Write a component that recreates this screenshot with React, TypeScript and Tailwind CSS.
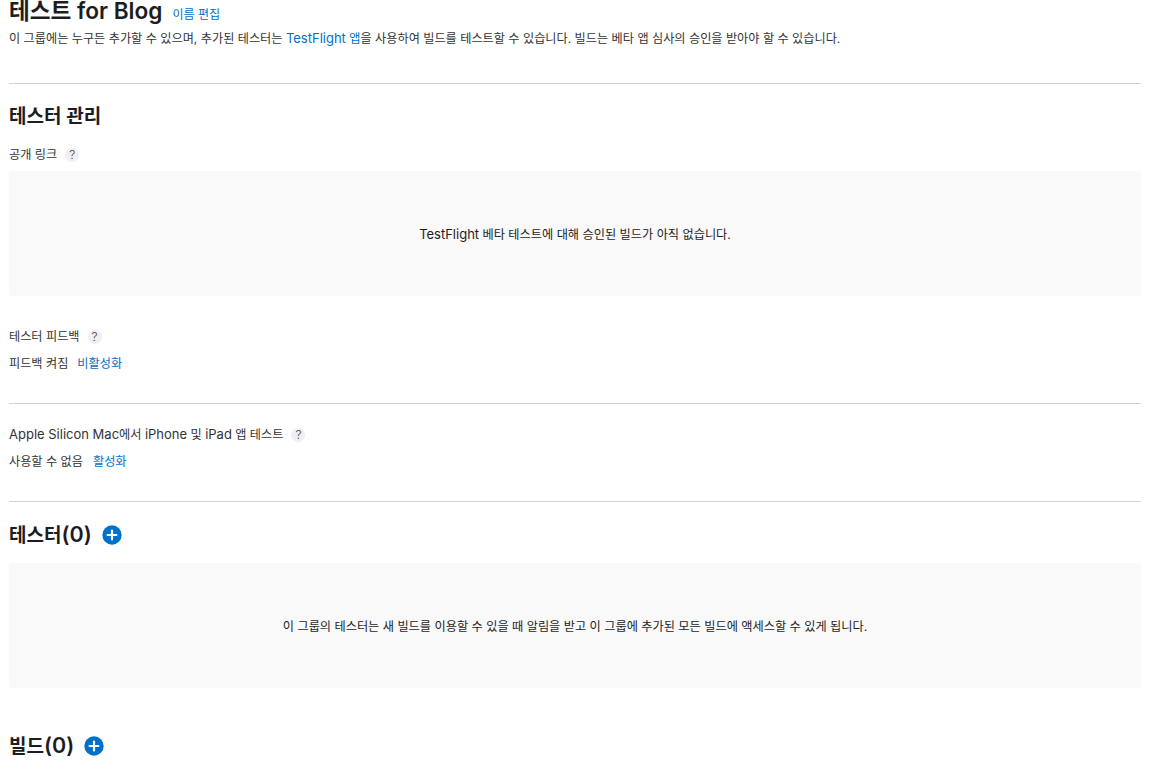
const FONT = "font-['Inter','Noto_Sans_CJK_KR',sans-serif]";

function Help() {
  return (
    <span className="ml-[8px] flex h-[14px] w-[14px] items-center justify-center rounded-full bg-[#f0f0f0] text-[12px] leading-none font-light text-[#444]">?</span>
  );
}

function Plus() {
  return (
    <svg width="20" height="20" viewBox="0 0 20 20" className="ml-[10px]">
      <circle cx="10" cy="10" r="9.7" fill="#0070c9" />
      <path d="M10 5.6v8.8M5.6 10h8.8" stroke="#fff" strokeWidth="2.2" strokeLinecap="round" />
    </svg>
  );
}

function Link({ children }: { children: React.ReactNode }) {
  return <span className="text-[#0070c9]">{children}</span>;
}

function L({ children }: { children: React.ReactNode }) {
  return <span className="text-[13px]">{children}</span>;
}

function Empty({ children }: { children: React.ReactNode }) {
  return (
    <div className="flex h-[125px] items-center justify-center rounded-[3px] bg-[#f9f9f9] pt-[2px] text-[12.2px] text-[#1d1d1f]">
      <span>{children}</span>
    </div>
  );
}

export default function App() {
  return (
    <div className={`${FONT} h-[766px] w-[1150px] overflow-hidden bg-white px-[9px] text-[12.17px] text-[#333]`}>
      <div className="flex h-[22px] items-center">
        <span className="text-[22.6px] leading-[22px] font-semibold text-[#1d1d1f]">테스트 for Blog</span>
        <span className="ml-[10px] mt-[7px] text-[12px]"><Link>이름 편집</Link></span>
      </div>
      <div className="mt-[6px] h-[20px] leading-[20px]">
        이 그룹에는 누구든 추가할 수 있으며, 추가된 테스터는 <Link><L>TestFlight</L> 앱</Link>을 사용하여 빌드를 테스트할 수 있습니다. 빌드는 베타 앱 심사의 승인을 받아야 할 수 있습니다.
      </div>
      <div className="mt-[35px] h-px bg-[#d2d2d2]" />
      <h2 className="mt-[19px] h-[28px] text-[19px] leading-[28px] font-semibold text-[#1d1d1f]">테스터 관리</h2>
      <div className="mt-[16px] flex h-[16px] items-center">공개 링크<Help /></div>
      <div className="mt-[8px]"><Empty><L>TestFlight</L> 베타 테스트에 대해 승인된 빌드가 아직 없습니다.</Empty></div>
      <div className="mt-[33px] flex h-[16px] items-center">테스터 피드백<Help /></div>
      <div className="mt-[11px] flex h-[16px] items-center">피드백 켜짐<span className="ml-[9px]"><Link>비활성화</Link></span></div>
      <div className="mt-[31px] h-px bg-[#d2d2d2]" />
      <div className="mt-[23px] flex h-[16px] items-center whitespace-pre"><span><L>Apple Silicon Mac</L>에서 <L>iPhone</L> 및 <L>iPad</L> 앱 테스트</span><Help /></div>
      <div className="mt-[11px] flex h-[16px] items-center">사용할 수 없음<span className="ml-[10px]"><Link>활성화</Link></span></div>
      <div className="mt-[31px] h-px bg-[#d2d2d2]" />
      <div className="mt-[19px] flex h-[28px] items-center">
        <span className="text-[19px] leading-[28px] font-semibold text-[#1d1d1f]">테스터<span className="text-[21.5px]">(0)</span></span><Plus />
      </div>
      <div className="mt-[14px]"><Empty><span className="block pt-px">이 그룹의 테스터는 새 빌드를 이용할 수 있을 때 알림을 받고 이 그룹에 추가된 모든 빌드에 액세스할 수 있게 됩니다.</span></Empty></div>
      <div className="mt-[44px] flex h-[28px] items-center">
        <span className="text-[19px] leading-[28px] font-semibold text-[#1d1d1f]">빌드<span className="text-[21.5px]">(0)</span></span><Plus />
      </div>
    </div>
  );
}
